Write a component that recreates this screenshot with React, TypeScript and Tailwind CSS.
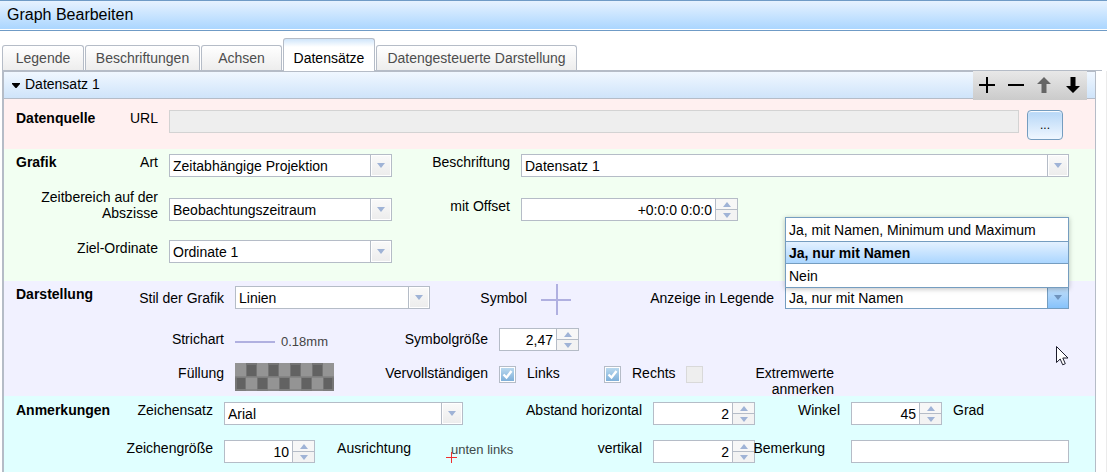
import { useState, type ReactNode } from "react";

const TABS = [
  { name: "Legende", width: "w-[82px]" },
  { name: "Beschriftungen", width: "w-[115px]" },
  { name: "Achsen", width: "w-[81px]" },
  { name: "Datensätze", width: "w-[92px]" },
  { name: "Datengesteuerte Darstellung", width: "w-[201px]" },
];

const LEGEND_OPTIONS = ["Ja, mit Namen, Minimum und Maximum", "Ja, nur mit Namen", "Nein"];

function Triangle({ up = false, color = "#9fb3d6" }: { up?: boolean; color?: string }) {
  return (
    <svg width="8" height="5" viewBox="0 0 8 5" aria-hidden="true">
      <path d={up ? "M0 5 4 0 8 5Z" : "M0 0H8L4 5Z"} fill={color} />
    </svg>
  );
}

function Select({ id, options, open = false }: { id: string; options: string[]; open?: boolean }) {
  const [value, setValue] = useState(options.length > 1 ? options[1] : options[0]);
  return (
    <div className={`relative flex h-[23px] w-full border bg-white ${open ? "border-[#759dc0]" : "border-[#b5bcc7]"}`}>
      <select
        id={id}
        value={value}
        onChange={(e) => setValue(e.target.value)}
        className="h-full w-full appearance-none bg-transparent pr-6 pl-[3px] outline-none"
      >
        {options.map((o) => (
          <option key={o}>{o}</option>
        ))}
      </select>
      <span
        className={`pointer-events-none absolute inset-y-0 right-0 flex w-[21px] items-center justify-center border-l ${
          open
            ? "border-[#759dc0] bg-linear-to-b from-[#c4e0fa] to-[#86c2fb]"
            : "border-[#b5bcc7] bg-linear-to-b from-[#fafafa] to-[#ececec] shadow-[inset_0_0_0_1px_#ffffff]"
        }`}
      >
        <Triangle color={open ? "#6f93bd" : undefined} />
      </span>
      {open && (
        <ul
          role="listbox"
          className="absolute -inset-x-px bottom-5 z-10 border border-[#759dc0] bg-white shadow-[0_1px_5px_rgba(0,0,0,0.25)]"
        >
          {options.map((o) => (
            <li
              key={o}
              role="option"
              aria-selected={o === value}
              onClick={() => setValue(o)}
              className={`flex h-[23px] items-center border-y pl-[3px] ${
                o === value
                  ? "border-[#759dc0] bg-linear-to-b from-[#e4f1ff] to-[#abd6ff] font-bold"
                  : "border-transparent"
              }`}
            >
              {o}
            </li>
          ))}
        </ul>
      )}
    </div>
  );
}

function Spinner({ id, value, className }: { id: string; value: string; className: string }) {
  return (
    <div className={`flex h-[23px] border border-[#b5bcc7] bg-white ${className}`}>
      <input id={id} defaultValue={value} className="min-w-0 flex-1 px-[3px] text-right outline-none" />
      <div className="flex w-[22px] shrink-0 flex-col border-l border-[#b5bcc7]">
        <button
          aria-label="Erhöhen"
          className="flex flex-1 items-center justify-center border-b border-[#b5bcc7] bg-[#f7f7f7]"
        >
          <Triangle up />
        </button>
        <button aria-label="Verringern" className="flex flex-1 items-center justify-center bg-[#f3f3f3]">
          <Triangle />
        </button>
      </div>
    </div>
  );
}

function Check({ id, checked = false, disabled = false }: { id: string; checked?: boolean; disabled?: boolean }) {
  return (
    <span className="relative mt-px h-[17px] w-[17px] shrink-0">
      <input
        id={id}
        type="checkbox"
        defaultChecked={checked}
        disabled={disabled}
        className="peer block h-[17px] w-[17px] appearance-none border border-[#b5bcc7] bg-white disabled:border-[#d9d9d9] disabled:bg-[#eeeeee]"
      />
      <svg
        viewBox="0 0 17 17"
        className="pointer-events-none absolute inset-0 hidden h-[17px] w-[17px] peer-checked:block"
        aria-hidden="true"
      >
        <defs>
          <linearGradient id={`${id}-fill`} x1="0" y1="0" x2="0" y2="1">
            <stop offset="0" stopColor="#b9d8ee" />
            <stop offset="1" stopColor="#7fb0da" />
          </linearGradient>
        </defs>
        <rect x="2" y="2" width="13" height="13" fill={`url(#${id}-fill)`} />
        <path d="M4.500 8.500 7.500 11.500 12.500 5" fill="none" stroke="#ffffff" strokeWidth="2.4" />
      </svg>
    </span>
  );
}

function Label({ htmlFor, children, className = "" }: { htmlFor?: string; children: ReactNode; className?: string }) {
  return (
    <label htmlFor={htmlFor} className={`text-right ${className}`}>
      {children}
    </label>
  );
}

function Lead({ title, htmlFor, children }: { title: string; htmlFor: string; children: ReactNode }) {
  return (
    <div className="flex justify-between">
      <h2 className="pl-px font-bold">{title}</h2>
      <label htmlFor={htmlFor}>{children}</label>
    </div>
  );
}

export default function App() {
  const [tab, setTab] = useState("Datensätze");
  return (
    <div className="flex min-h-screen flex-col bg-white font-['Liberation_Sans',Arial,sans-serif] text-sm leading-4 text-black">
      <header className="border-y border-[#6f9bc6]">
        <h1 className="flex h-[29px] items-center border-b border-white bg-linear-to-b from-[#e6f2ff] to-[#abd6ff] pl-[7px] text-base">
          Graph Bearbeiten
        </h1>
      </header>

      <nav role="tablist" className="mt-[7px] mr-[5px] ml-[2px] flex items-end gap-px border-b border-[#b5bcc7]">
        {TABS.map((t) => (
          <button
            key={t.name}
            role="tab"
            aria-selected={tab === t.name}
            onClick={() => setTab(t.name)}
            className={`rounded-t-[3px] border border-b-0 border-[#b5bcc7] whitespace-nowrap ${t.width} ${
              tab === t.name
                ? "-mb-px h-[33px] bg-linear-to-b from-[#cfe5fa] to-white to-25% pt-1.5"
                : "h-[25px] bg-linear-to-b from-white to-[#ededed] text-[#4d4d4d]"
            }`}
          >
            {t.name}
          </button>
        ))}
      </nav>

      <div className="flex flex-1 border-r border-[#ebebeb] pr-[10px] pl-[2px]">
        <main className="flex min-w-0 flex-1 flex-col border-t border-r border-l-2 border-[#b5bcc7]">
          <div className="relative flex h-[27px] border-b border-[#b5bcc7] bg-linear-to-b from-[#f0f7ff] to-[#cfe4fa]">
            <button className="flex items-center gap-[5px] pb-[3px] pl-2">
              <svg width="8" height="5" viewBox="0 0 8 5" aria-hidden="true" className="mt-[3px]">
                <path d="M0 0H8V1L4.500 5H3.500L0 1Z" fill="#000000" />
              </svg>
              Datensatz 1
            </button>
            <div className="absolute -top-px right-2 flex h-[29px] items-center bg-linear-to-b from-[#e8e8e8] to-[#cbcbcb] pb-px">
              <button aria-label="Hinzufügen" className="flex w-[28px] justify-center">
                <svg width="16" height="16" viewBox="0 0 16 16">
                  <path d="M7 0h2v7h7v2H9v7H7V9H0V7h7Z" />
                </svg>
              </button>
              <button aria-label="Entfernen" className="flex w-[29px] justify-center">
                <svg width="16" height="16" viewBox="0 0 16 16">
                  <path d="M0 7h16v2H0Z" />
                </svg>
              </button>
              <button aria-label="Nach oben" className="flex w-[28px] justify-center">
                <svg width="14" height="16" viewBox="0 0 14 16">
                  <path d="M7 0 14 7H9.500V16H4.500V7H0Z" fill="#666666" />
                </svg>
              </button>
              <button aria-label="Nach unten" className="flex w-[29px] justify-center">
                <svg width="14" height="16" viewBox="0 0 14 16">
                  <path d="M7 16 14 9H9.500V0H4.500V9H0Z" />
                </svg>
              </button>
            </div>
          </div>

          <section className="bg-[#fff0f0] pt-[11px] pr-8 pb-[9px] pl-[11px]">
            <div className="grid grid-cols-[143px_1fr] gap-x-[11px]">
              <Lead title="Datenquelle" htmlFor="url">
                URL
              </Lead>
              <div className="flex items-start gap-2">
                <input id="url" disabled className="h-[23px] min-w-0 flex-1 border border-[#d3d3d3] bg-[#eeeeee]" />
                <button
                  aria-label="Datenquelle auswählen"
                  className="h-[30px] w-9 rounded-[4px] border border-[#759dc0] bg-linear-to-b from-[#b5d6f7] to-[#f0f7ff] text-xs shadow-[inset_0_1px_1px_#ffffff]"
                >
                  ...
                </button>
              </div>
            </div>
          </section>

          <section className="bg-[#f2fff2] pt-[5px] pr-[26px] pb-[18px] pl-[11px]">
            <div className="grid grid-cols-[143px_223px_107px_1fr] gap-x-[11px]">
              <Lead title="Grafik" htmlFor="art">
                Art
              </Lead>
              <Select id="art" options={["Zeitabhängige Projektion"]} />
              <Label htmlFor="beschriftung">Beschriftung</Label>
              <Select id="beschriftung" options={["Datensatz 1"]} />
            </div>
            <div className="mt-3 grid grid-cols-[143px_223px_107px_1fr] items-end gap-x-[11px]">
              <Label htmlFor="zeitbereich">
                Zeitbereich auf der
                <br />
                Abszisse
              </Label>
              <Select id="zeitbereich" options={["Beobachtungszeitraum"]} />
              <Label htmlFor="offset" className="mb-[7px]">
                mit Offset
              </Label>
              <Spinner id="offset" value="+0:0:0 0:0:0" className="w-[217px]" />
            </div>
            <div className="mt-[19px] grid grid-cols-[143px_223px_107px_1fr] gap-x-[11px]">
              <Label htmlFor="ordinate">Ziel-Ordinate</Label>
              <Select id="ordinate" options={["Ordinate 1"]} />
            </div>
          </section>

          <section className="relative bg-[#f1f1ff] pt-[5px] pr-[26px] pl-[11px]">
            <div className="grid grid-cols-[209px_195px_86px_33px_192px_1fr] gap-x-[11px]">
              <div className="flex justify-between">
                <h2 className="pl-px font-bold">Darstellung</h2>
                <label htmlFor="stil" className="pt-1">
                  Stil der Grafik
                </label>
              </div>
              <Select id="stil" options={["Linien"]} />
              <span className="pt-1 text-right">Symbol</span>
              <svg width="33" height="32" viewBox="0 0 33 32" className="-mt-0.5 -mb-2" aria-label="Kreuz">
                <path d="M3 16H34M19 0V31" fill="none" stroke="#b0b0e0" strokeWidth="2" />
              </svg>
              <Label htmlFor="legende" className="pt-1">
                Anzeige in Legende
              </Label>
              <Select id="legende" options={LEGEND_OPTIONS} open />
            </div>
            <div className="mt-[19px] grid grid-cols-[209px_101px_141px_1fr] gap-x-[11px]">
              <span className="pt-[3px] text-right">Strichart</span>
              <span className="flex items-center gap-1.5 pt-[5px] text-[13px] text-[#444444]">
                <span className="h-0.5 w-10 bg-[#b0b0e0]" />
                0.18mm
              </span>
              <Label htmlFor="groesse" className="pt-[3px]">
                Symbolgröße
              </Label>
              <Spinner id="groesse" value="2,47" className="w-20" />
            </div>
            <div className="mt-3 grid h-[33px] grid-cols-[209px_101px_141px_1fr] gap-x-[11px]">
              <span className="pt-0.5 text-right">Füllung</span>
              <svg width="99" height="28" viewBox="0 0 99 28" aria-label="Karomuster">
                <rect width="99" height="28" fill="#949494" />
                <path
                  d="M11 0h11v14h-11zM33 0h11v14h-11zM55 0h11v14h-11zM77 0h11v14h-11zM0 14h11v14h-11zM22 14h11v14h-11zM44 14h11v14h-11zM66 14h11v14h-11zM88 14h11v14h-11z"
                  fill="#757575"
                />
                <path
                  d="M12 2h9v11h-9zM34 2h9v11h-9zM56 2h9v11h-9zM78 2h9v11h-9zM2 15h8v11h-8zM23 15h9v11h-9zM45 15h9v11h-9zM67 15h9v11h-9zM89 15h8v11h-8z"
                  fill="#626262"
                />
                <path d="M0 14H99M0 27H99" stroke="#808080" strokeWidth="1.500" />
              </svg>
              <span className="pt-0.5 text-right">Vervollständigen</span>
              <div className="flex items-start pt-0.5">
                <Check id="links" checked />
                <label htmlFor="links" className="w-[88px] pl-[11px]">
                  Links
                </label>
                <Check id="rechts" checked />
                <label htmlFor="rechts" className="w-[65px] pl-[11px]">
                  Rechts
                </label>
                <Check id="extrem" disabled />
                <label htmlFor="extrem" className="w-[131px] text-right">
                  Extremwerte
                  <br />
                  anmerken
                </label>
              </div>
            </div>
            <svg
              width="13"
              height="20"
              viewBox="0 0 13 20"
              className="absolute top-[65px] right-[26px]"
              aria-hidden="true"
            >
              <path
                d="M.5.500V16.500L4.200 13 6.700 18.800 9.300 17.700 6.800 12H12Z"
                fill="#ffffff"
                stroke="#1c1c2c"
              />
            </svg>
          </section>

          <section className="flex-1 bg-[#e0ffff] pt-[6px] pr-[26px] pb-2 pl-[11px]">
            <div className="grid grid-cols-[198px_239px_168px_102px_74px_91px_1fr] gap-x-[11px]">
              <Lead title="Anmerkungen" htmlFor="schrift">
                Zeichensatz
              </Lead>
              <Select id="schrift" options={["Arial"]} />
              <Label htmlFor="horizontal">Abstand horizontal</Label>
              <Spinner id="horizontal" value="2" className="w-full" />
              <Label htmlFor="winkel">Winkel</Label>
              <Spinner id="winkel" value="45" className="w-full" />
              <span>Grad</span>
            </div>
            <div className="mt-[15px] grid grid-cols-[198px_91px_85px_102px_107px_102px_74px_1fr] gap-x-[11px]">
              <Label htmlFor="zeichen">Zeichengröße</Label>
              <Spinner id="zeichen" value="10" className="w-full" />
              <span className="text-right">Ausrichtung</span>
              <span className="relative pt-0.5 pl-[29px] text-[13px] text-[#3f4a4a]">
                <svg width="11" height="11" viewBox="0 0 11 11" className="absolute top-3 left-6" aria-hidden="true">
                  <path d="M0 5.500H11M5.500 0V11" stroke="#f03030" fill="none" />
                </svg>
                unten links
              </span>
              <Label htmlFor="vertikal">vertikal</Label>
              <Spinner id="vertikal" value="2" className="w-full" />
              <label htmlFor="bemerkung" className="z-10 flex justify-end pr-[15px]">
                Bemerkung
              </label>
              <input id="bemerkung" className="h-[23px] min-w-0 border border-[#b5bcc7] bg-white px-1" />
            </div>
          </section>
        </main>
      </div>
    </div>
  );
}
